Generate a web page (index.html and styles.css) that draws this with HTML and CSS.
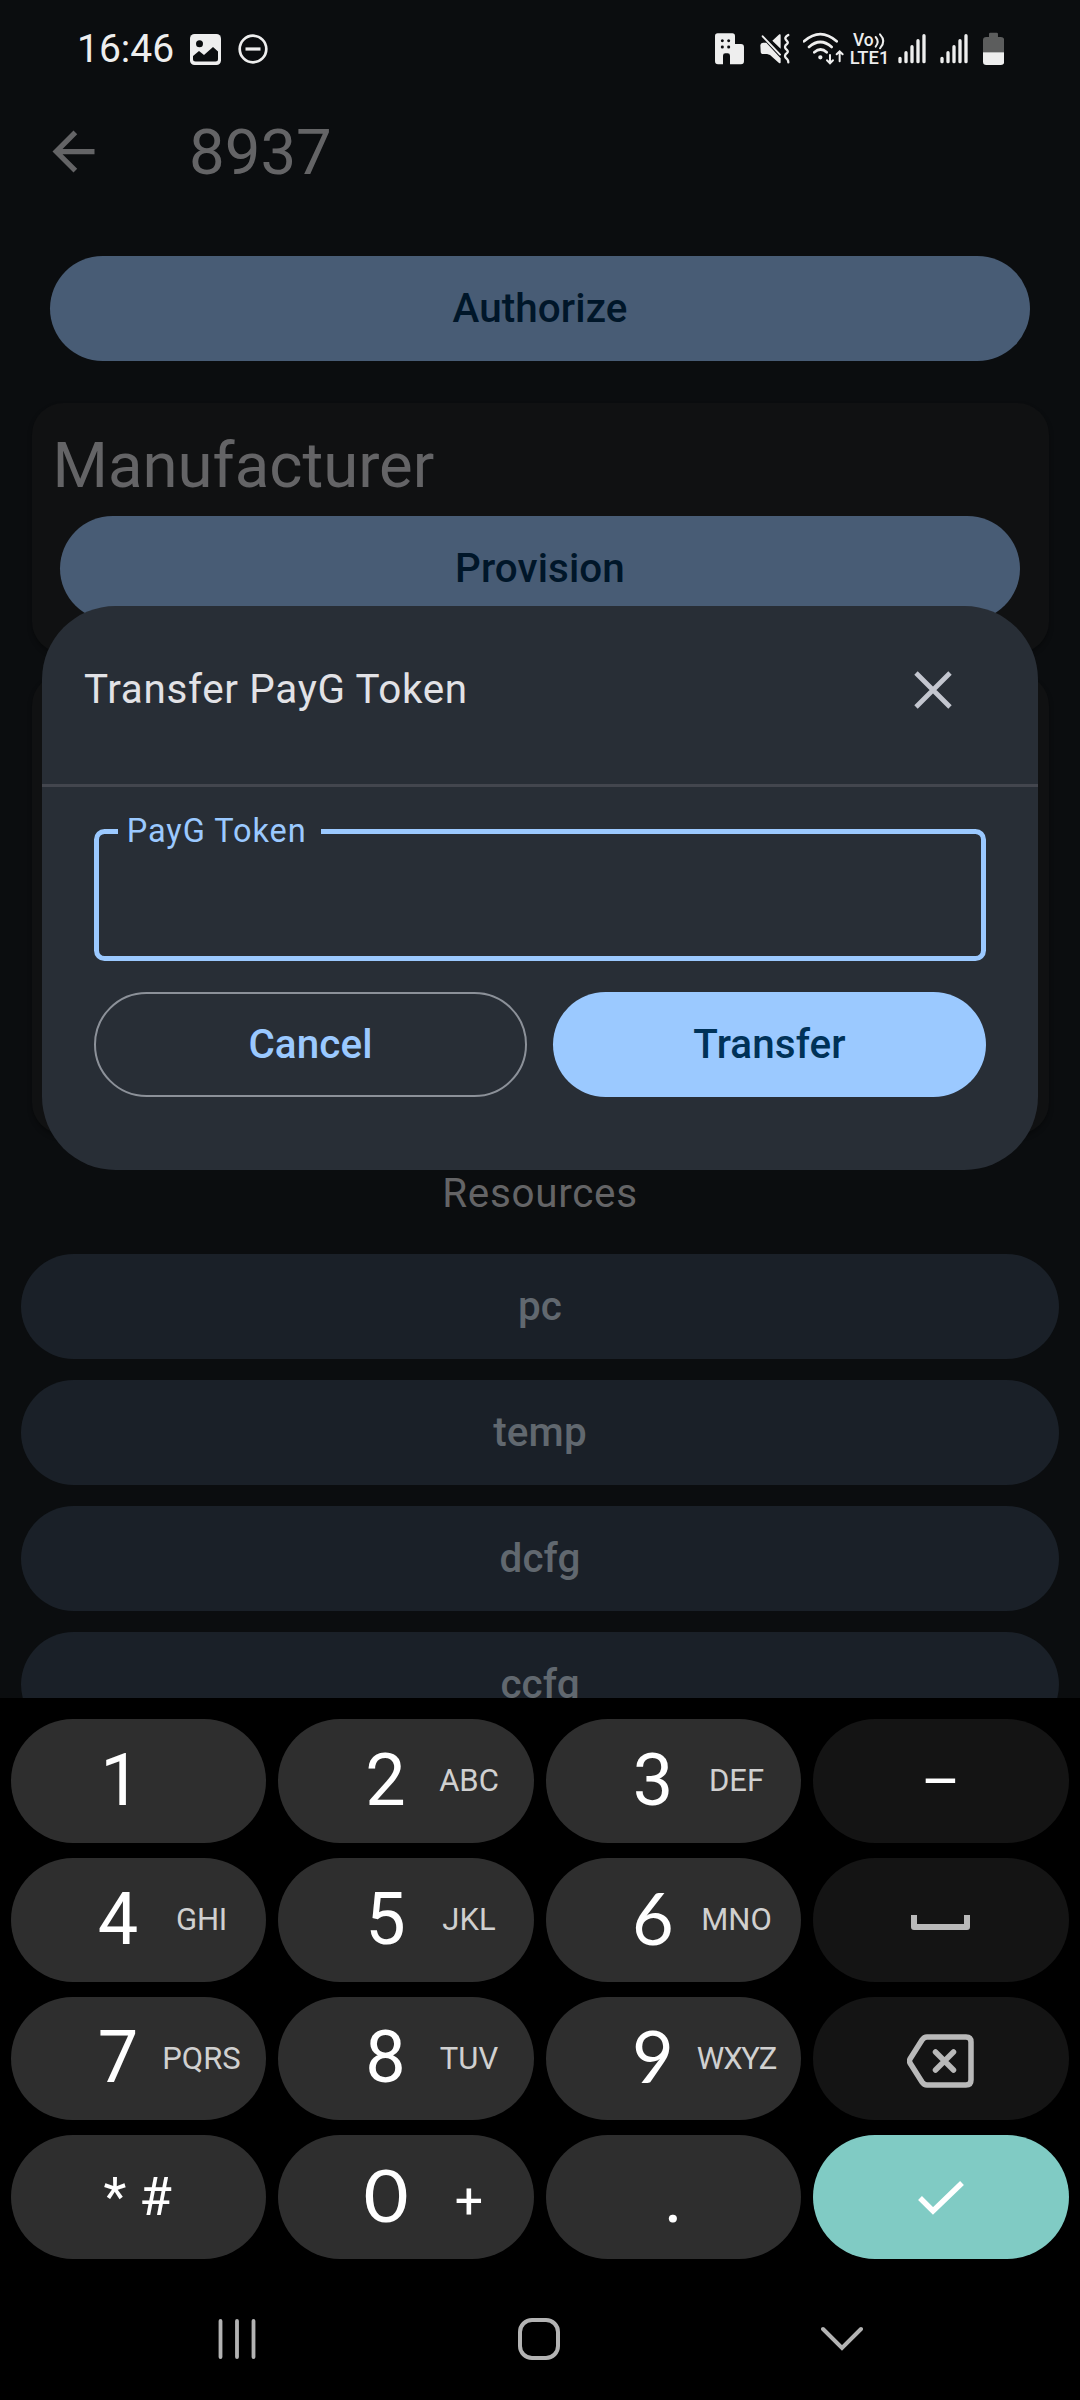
FILE: index.html
```html
<!DOCTYPE html>
<html lang="en">
<head>
<meta charset="utf-8">
<title>8937</title>
<link rel="stylesheet" href="styles.css">
</head>
<body>
<div class="screen">
  <div class="app">
    <div class="status">
      <span class="clock">16:46</span>
      <svg class="s-image" width="31" height="31" viewBox="0 0 31 31"><rect width="31" height="31" rx="4.500" fill="#eee"/><circle cx="9.500" cy="9.800" r="3.500" fill="#0b0d0f"/><path d="M3 22L9 17l5 4 9-8 5 4.500V25a2.500 2.500 0 0 1-2.500 2.500h-20A2.500 2.500 0 0 1 3 25z" fill="#0b0d0f"/></svg>
      <svg class="s-dnd" width="30" height="30" viewBox="0 0 30 30" fill="none" stroke="#eee" stroke-width="2.700"><circle cx="15" cy="15" r="13.300"/><path d="M7.500 15h15" stroke-width="3.200"/></svg>
      <div class="indicators">
        <svg width="29" height="33.300" viewBox="75 65 87 100"><path d="M83 69h44q8 0 8 8v24h18q9 0 9 9v43q0 9-9 9h-33v-26q0-7-7-7h-7q-7 0-7 7v26H84q-9 0-9-9V77q0-8 8-8z" fill="#eee"/><g fill="#0b0d0f"><circle cx="97" cy="91" r="4.500"/><circle cx="116" cy="91" r="4.500"/><circle cx="97" cy="110" r="4.500"/><circle cx="116" cy="110" r="4.500"/></g></svg>
        <svg class="s-mute" width="30" height="33.300" viewBox="210 65 90 100"><path d="M247 91l21-19q4-2 4 3v40zM211 105q0-7 8-8h10l43 47v12q0 5-5 2l-27-24-9-3h-11q-8 0-8-7z" fill="#eee"/><path d="M218 78l52 55" stroke="#eee" stroke-width="6" stroke-linecap="round"/><path d="M295 74q-9 5-9 10 0 4 5 8 5 5 0 9-6 4-6 9t6 9q5 5 0 9-6 4-6 9t6 9q4 4 4 10" fill="none" stroke="#eee" stroke-width="7" stroke-linecap="round"/></svg>
        <svg class="s-wifi" width="42" height="33.300" viewBox="340 65 126 100" fill="none" stroke="#eee" stroke-width="8" stroke-linecap="round"><path d="M343 93q49-43 98 0M358 110q34-30 68 0M374 126q19-17 37 0"/><circle cx="392" cy="141" r="3" stroke-width="7"/><path d="M421 134v23M412 150l9 9 9-9M450 153v-29M441 132l9-9 9 9" stroke-width="6"/></svg>
        <svg class="s-volte" width="38" height="33.300" viewBox="480 65 114 100" fill="#eee"><text class="volte" x="489" y="108" textLength="62" lengthAdjust="spacingAndGlyphs">Vo</text><path d="M557 80q12 14 0 29M570 72q20 21 0 42" fill="none" stroke="#eee" stroke-width="6" stroke-linecap="round"/><text class="volte" x="479" y="162" textLength="119" lengthAdjust="spacingAndGlyphs">LTE1</text></svg>
        <svg class="s-sig" width="28" height="33.300" viewBox="624 65 84 100" stroke="#eee" stroke-width="10" stroke-linecap="round"><path d="M630 144v10M648 127v27M666 109v45M684 91v63M702 76v78"/></svg>
        <svg class="s-sig2" width="28" height="33.300" viewBox="624 65 84 100" stroke="#eee" stroke-width="10" stroke-linecap="round"><path d="M630 144v10M648 127v27M666 109v45M684 91v63M702 76v78"/></svg>
        <svg class="s-batt" width="21.300" height="33.300" viewBox="879 65 64 100"><path d="M879 126V90q0-10 10-10h8v-9q0-4 4-4h19q4 0 4 4v9h9q10 0 10 10v36z" fill="#5c5d5d"/><path d="M879 126h64v28q0 10-10 10h-44q-10 0-10-10z" fill="#eee"/></svg>
      </div>
    </div>
    <div class="topbar">
      <svg width="63" height="63" viewBox="0 0 24 24" fill="#646466"><path d="M20 11H7.830l5.590-5.590L12 4l-8 8 8 8 1.410-1.410L7.830 13H20z"/></svg>
      <h1>8937</h1>
    </div>
    <main>
      <div class="pill filled authorize">Authorize</div>
      <section class="card manufacturer">
        <h2>Manufacturer</h2>
        <div class="pill filled">Provision</div>
      </section>
      <section class="card second"></section>
      <div class="section-title">Resources</div>
      <div class="list">
        <div class="pill tonal">pc</div>
        <div class="pill tonal">temp</div>
        <div class="pill tonal">dcfg</div>
        <div class="pill tonal">ccfg</div>
      </div>
    </main>
  </div>

  <div class="dialog">
    <div class="dialog-head">
      <span>Transfer PayG Token</span>
      <svg width="38" height="38" viewBox="0 0 38 38"><path d="M2 2l34 34M36 2L2 36" stroke="#c3c6cf" stroke-width="4.800"/></svg>
    </div>
    <div class="dialog-body">
      <fieldset class="field"><legend>PayG Token</legend></fieldset>
      <div class="actions">
        <div class="pill outlined">Cancel</div>
        <div class="pill primary">Transfer</div>
      </div>
    </div>
  </div>

  <div class="keyboard">
    <div class="key"><b class="one">1</b></div>
    <div class="key"><b>2</b><i>ABC</i></div>
    <div class="key"><b>3</b><i>DEF</i></div>
    <div class="key dark"><span class="dash">–</span></div>
    <div class="key"><b>4</b><i class="wide">GHI</i></div>
    <div class="key"><b>5</b><i>JKL</i></div>
    <div class="key"><b class="round">6</b><i>MNO</i></div>
    <div class="key dark"><svg class="space" width="59" height="16" viewBox="0 0 59 16"><path d="M3 1v12h53V1" fill="none" stroke="#b9b9b9" stroke-width="6" stroke-linejoin="round"/></svg></div>
    <div class="key"><b>7</b><i>PQRS</i></div>
    <div class="key"><b>8</b><i>TUV</i></div>
    <div class="key"><b class="round">9</b><i class="tight">WXYZ</i></div>
    <div class="key dark"><svg class="bksp" width="67" height="54" viewBox="0 0 67 54" fill="none" stroke="#b9b9b9" stroke-linejoin="round" stroke-linecap="round"><path d="M20 3h39q5 0 5 5v38q0 5-5 5H20q-3 0-5-3L3 29q-1-2 0-4L15 6q2-3 5-3z" stroke-width="5.500"/><path d="M28.500 18l18 18M46.500 18l-18 18" stroke-width="5.500"/></svg></div>
    <div class="key symbols"><span class="star">*</span><span>#</span></div>
    <div class="key"><b class="round zero">0</b><i class="plus">+</i></div>
    <div class="key period"><span>.</span></div>
    <div class="key enter"><svg width="46" height="35" viewBox="0 0 46 35"><path d="M2 18l13 13L44 3" fill="none" stroke="#fff" stroke-width="5.500"/></svg></div>
  </div>

  <div class="nav">
    <svg width="38" height="42" viewBox="0 0 38 42" stroke="#b3b3b3" stroke-width="3.800" stroke-linecap="round"><path d="M2.500 3v36M19 3v36M35.500 3v36"/></svg>
    <svg width="42" height="42" viewBox="0 0 42 42"><rect x="2" y="2" width="38" height="38" rx="12" fill="none" stroke="#b3b3b3" stroke-width="4"/></svg>
    <svg width="42" height="42" viewBox="0 0 42 42"><path d="M2 11l19 19 19-19" fill="none" stroke="#b3b3b3" stroke-width="4" stroke-linecap="round"/></svg>
  </div>
</div>
</body>
</html>
```
FILE: styles.css
```css
* { box-sizing: border-box; }
body { margin: 0; background: #000; font-family: Roboto, "Liberation Sans", sans-serif; }
svg { display: block; flex: none; }
h1, h2 { margin: 0; font-weight: 400; font-size: 63.5px; line-height: 74px; color: #646466; }

.screen { position: relative; width: 1080px; height: 2400px; overflow: hidden; display: flex; flex-direction: column; background: #000; }
.app { height: 1698px; flex: none; overflow: hidden; background: #0b0d0f; }

/* status bar */
.status { height: 84px; padding: 13px 75.700px 0 77px; display: flex; align-items: center; color: #eee; }
.clock { font-size: 39px; line-height: 46px; width: 97px; white-space: nowrap; }
.s-image { margin-left: 16px; margin-top: 2px; }
.s-dnd { margin-left: 17px; margin-top: 1px; }
.indicators { margin-left: auto; display: flex; }
.s-mute { margin-left: 16px; }
.s-wifi { margin-left: 13.300px; }
.s-volte { margin-left: 4.700px; overflow: visible; }
.s-sig { margin-left: 10px; }
.s-sig2 { margin-left: 14.300px; }
.s-batt { margin-left: 14.700px; }
.volte { font-size: 56px; font-weight: 500; }

.topbar { height: 135px; padding-left: 42px; display: flex; align-items: center; gap: 84px; }
.topbar h1 { padding-top: 2px; }

/* buttons */
.pill { height: 105px; border-radius: 52.500px; display: flex; align-items: center; justify-content: center; font-size: 40.400px; font-weight: 500; letter-spacing: .1px; }
.filled { background: #485c75; color: #001629; }
.tonal { background: #1a2028; color: #61686f; }
.primary { background: #9bc9ff; color: #003258; }
.outlined { border: 2.600px solid #8c9199; color: #9bc9ff; }

main { padding-top: 37px; }
.authorize { margin: 0 50px; }
.card { margin: 0 31.500px; background: #101112; border-radius: 31.500px; box-shadow: 0 3px 5px rgba(0, 0, 0, .3); }
.manufacturer { margin-top: 42px; height: 250px; padding: 25.500px 28.500px 0; }
.manufacturer h2 { margin-left: -7.500px; margin-bottom: 13.500px; }
.second { margin-top: 21px; height: 460px; }
.section-title { height: 120px; padding-top: 35.500px; text-align: center; font-size: 40.400px; line-height: 47px; letter-spacing: .7px; color: #646466; }
.list { padding: 0 21px; display: flex; flex-direction: column; gap: 21px; }

/* dialog */
.dialog { position: absolute; left: 42px; top: 605.500px; width: 996px; height: 564.500px; border-radius: 73.500px; background: #282e36; }
.dialog-head { height: 181.500px; padding: 0 86px 10.500px 42px; display: flex; align-items: center; justify-content: space-between; border-bottom: 3px solid #43464e; font-size: 40.400px; letter-spacing: .670px; color: #e2e2e6; }
.dialog-body { padding: 24.500px 52px 0; }
.field { margin: 0; height: 149.500px; min-width: 0; padding: 0 0 0 18.700px; border: 5.250px solid #9bc9ff; border-radius: 10.500px; }
.field legend { height: 39px; padding: 0 14px 0 9px; font-size: 32.500px; line-height: 38px; letter-spacing: .950px; color: #9bc9ff; }
.actions { margin-top: 31px; display: grid; grid-template-columns: 1fr 1fr; gap: 26px; }

/* keypad */
.keyboard { flex: none; height: 561px; padding: 21px 11.500px 0 10.500px; display: grid; grid-template-columns: repeat(4, 1fr); grid-template-rows: repeat(4, 123.750px); column-gap: 12px; row-gap: 15px; color: #fff; }
.key { border-radius: 62px; background: #2e2e2e; display: flex; align-items: center; }
.key b { width: 60px; margin-left: 77.500px; text-align: center; font-size: 72px; font-weight: 400; line-height: 84px; }
.key .one { margin-left: 80px; }
.key i { width: 110px; margin-left: -1.500px; padding-top: 1px; display: flex; justify-content: center; font-style: normal; font-size: 31px; line-height: 36px; color: #d0d0d0; }
.key .round { font-family: Lato, sans-serif; padding-bottom: 6px; }
.key .zero { transform: scaleX(1.08); }
.key .wide { letter-spacing: -.3px; }
.key .tight { letter-spacing: -1.200px; }
.key .plus { font-size: 50px; color: #fff; padding-top: 8px; }
.dark { background: #141414; justify-content: center; }
.dash { font-size: 60px; line-height: 60px; padding-top: 3px; }
.space { margin-top: 4px; }
.bksp { margin-top: 5px; }
.symbols { justify-content: center; gap: 13px; font-size: 53px; padding-right: 1px; }
.period { justify-content: center; font-size: 72px; }
.enter { background: #80cbc4; justify-content: center; }

.nav { flex: 1; padding: 18px 217px 0 218px; display: flex; align-items: center; justify-content: space-between; }
```
